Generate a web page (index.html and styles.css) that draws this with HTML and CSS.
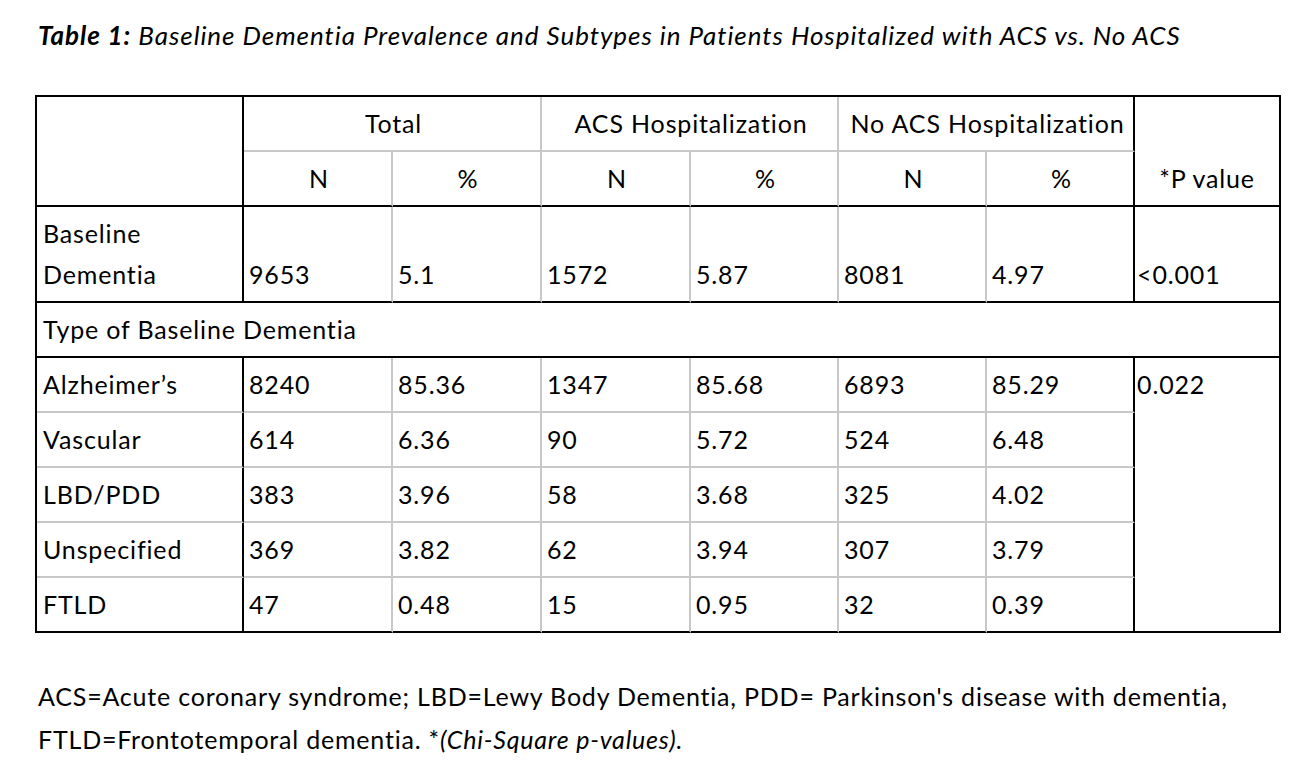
FILE: index.html
```html
<!DOCTYPE html>
<html lang="en">
<head>
<meta charset="utf-8">
<title>Table 1</title>
<link rel="stylesheet" href="styles.css">
</head>
<body>
<div class="page">
  <p class="caption"><b>Table 1:</b> Baseline Dementia Prevalence and Subtypes in Patients Hospitalized with ACS vs. No ACS</p>
  <table class="data">
    <colgroup>
      <col class="c-label">
      <col class="c-w149"><col class="c-w149"><col class="c-w149">
      <col class="c-w148"><col class="c-w148"><col class="c-w148">
      <col class="c-p">
    </colgroup>
    <thead>
      <tr class="h1">
        <th class="corner" rowspan="2"></th>
        <th colspan="2">Total</th>
        <th colspan="2">ACS Hospitalization</th>
        <th colspan="2" class="before-p">No ACS Hospitalization</th>
        <th class="pv-head" rowspan="2">*P value</th>
      </tr>
      <tr class="h2">
        <th>N</th><th>%</th><th>N</th><th>%</th><th>N</th><th class="before-p">%</th>
      </tr>
    </thead>
    <tbody>
      <tr class="base">
        <td class="label">Baseline<br>Dementia</td>
        <td>9653</td><td>5.1</td><td>1572</td><td>5.87</td><td>8081</td><td class="before-p">4.97</td>
        <td class="pv">&lt;0.001</td>
      </tr>
      <tr class="section">
        <td colspan="8">Type of Baseline Dementia</td>
      </tr>
      <tr>
        <td class="label">Alzheimer’s</td>
        <td>8240</td><td>85.36</td><td>1347</td><td>85.68</td><td>6893</td><td class="before-p">85.29</td>
        <td class="pv pv-span" rowspan="5">0.022</td>
      </tr>
      <tr>
        <td class="label">Vascular</td>
        <td>614</td><td>6.36</td><td>90</td><td>5.72</td><td>524</td><td class="before-p">6.48</td>
      </tr>
      <tr>
        <td class="label">LBD/PDD</td>
        <td>383</td><td>3.96</td><td>58</td><td>3.68</td><td>325</td><td class="before-p">4.02</td>
      </tr>
      <tr>
        <td class="label">Unspecified</td>
        <td>369</td><td>3.82</td><td>62</td><td>3.94</td><td>307</td><td class="before-p">3.79</td>
      </tr>
      <tr class="last">
        <td class="label">FTLD</td>
        <td>47</td><td>0.48</td><td>15</td><td>0.95</td><td>32</td><td class="before-p">0.39</td>
      </tr>
    </tbody>
  </table>
  <p class="note">ACS=Acute coronary syndrome; LBD=Lewy Body Dementia, PDD= Parkinson's disease with dementia,<br>FTLD=Frontotemporal dementia. *<i>(Chi-Square p-values).</i></p>
</div>
</body>
</html>
```

FILE: styles.css
```css
html, body {
  margin: 0;
  padding: 0;
  background: #ffffff;
}

body {
  font-family: Lato, "Open Sans", "Liberation Sans", sans-serif;
  color: #000000;
}

.page {
  display: flex;
  flex-direction: column;
  align-items: flex-start;
  padding: 20px 0 0 35px;
}

.caption {
  margin: 0 0 0 3px;
  font-size: 26px;
  line-height: 30px;
  letter-spacing: 0.95px;
  font-style: italic;
  white-space: nowrap;
}

.caption b {
  font-weight: 700;
}

.data {
  margin-top: 45px;
  border-collapse: separate;
  border-spacing: 0;
  table-layout: fixed;
  width: 1246px;
  border-top: 2px solid #000;
  border-left: 2px solid #000;
  font-size: 25px;
  letter-spacing: 0.85px;
  line-height: 41px;
}

.c-label { width: 207px; }
.c-w149 { width: 149px; }
.c-w148 { width: 148px; }
.c-p { width: 146px; }

.data th,
.data td {
  padding: 6px 2px 6px 5px;
  border-right: 2px solid #c8c8c8;
  border-bottom: 2px solid #c8c8c8;
  text-align: left;
  vertical-align: top;
  font-weight: 400;
  white-space: nowrap;
}

.data th {
  text-align: center;
  vertical-align: middle;
}

.data .corner,
.data .label {
  border-right-color: #000;
  padding-left: 6px;
}

.data .before-p {
  border-right-color: #000;
}

.data .pv,
.data .pv-head {
  border-right-color: #000;
  padding-left: 2px;
}

.data .pv-head {
  vertical-align: bottom;
  text-align: center;
  border-bottom-color: #000;
}

.data .h2 th {
  border-bottom-color: #000;
}

.data .corner {
  border-bottom-color: #000;
}

.data .base td {
  vertical-align: bottom;
  border-bottom-color: #000;
}

.data .base .label {
  vertical-align: top;
}

.data .section td {
  border-right-color: #000;
  border-bottom-color: #000;
  padding-left: 6px;
}

.data .last td,
.data .pv-span {
  border-bottom-color: #000;
}

.note {
  margin: 42px 0 0 3px;
  font-size: 25px;
  letter-spacing: 0.8px;
  line-height: 43px;
  white-space: nowrap;
}
```
